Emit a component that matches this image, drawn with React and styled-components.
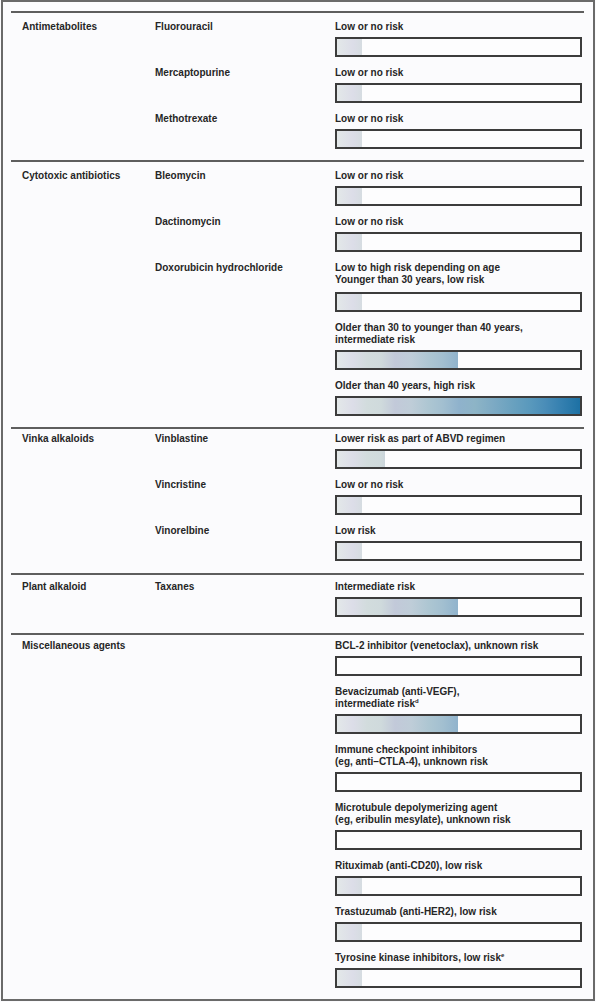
import styled, { createGlobalStyle } from "styled-components";

const GlobalStyle = createGlobalStyle`
  body {
    margin: 0;
    background: #fbfbfd;
    font-family: "Liberation Sans", Arial, sans-serif;
  }
`;

const Frame = styled.div`
  box-sizing: border-box;
  width: 594px;
  height: 1001px;
  margin-left: 1px;
  border: 2px solid #6a6a6a;
  padding: 9px 9px 0 8px;
  background: #fbfbfd;
`;

const Section = styled.div`
  border-top: 2px solid #5e5e5e;
  padding: ${(p) => p.$pt}px 0 ${(p) => p.$pb}px 11px;
  display: grid;
  grid-template-columns: 133px 180px 247px;
  row-gap: 10px;
`;

const Cell = styled.div`
  font-size: 10px;
  line-height: 12px;
  font-weight: 700;
  color: #262626;
`;

const Entries = styled.div`
  display: flex;
  flex-direction: column;
  gap: 10px;
`;

const Entry = styled.div`
  display: flex;
  flex-direction: column;
`;

const Label = styled.div`
  font-size: 10px;
  line-height: 12px;
  font-weight: 700;
  color: #262626;
  margin-bottom: ${(p) => p.$space}px;

  sup {
    font-size: 6px;
    line-height: 0;
    vertical-align: 4px;
  }
`;

const Bar = styled.div`
  box-sizing: border-box;
  height: 20px;
  width: 247px;
  border: 2px solid #3c3c3c;
  background: #fdfdfe;
  overflow: hidden;
`;

const Fill = styled.div`
  height: 100%;
  width: ${(p) => p.$w}px;
  background: linear-gradient(
    to right,
    #e3e8e9 0px,
    #dcdde8 16px,
    #d2dcdd 30px,
    #cfdadc 44px,
    #c2c9d9 58px,
    #bfcdd8 74px,
    #adc6d2 92px,
    #a2bfd0 106px,
    #8fb2cc 122px,
    #8db4c6 138px,
    #7daac4 156px,
    #69a1bf 176px,
    #5898bc 194px,
    #4a8db8 208px,
    #3580b0 224px,
    #1d71a4 243px
  );
  background-size: 243px 100%;
`;

const data = [
  {
    category: "Antimetabolites",
    pt: 8,
    pb: 11,
    drugs: [
      { name: "Fluorouracil", entries: [{ lines: ["Low or no risk"], fill: 25 }] },
      { name: "Mercaptopurine", entries: [{ lines: ["Low or no risk"], fill: 25 }] },
      { name: "Methotrexate", entries: [{ lines: ["Low or no risk"], fill: 25 }] },
    ],
  },
  {
    category: "Cytotoxic antibiotics",
    pt: 8,
    pb: 11,
    drugs: [
      { name: "Bleomycin", entries: [{ lines: ["Low or no risk"], fill: 25 }] },
      { name: "Dactinomycin", entries: [{ lines: ["Low or no risk"], fill: 25 }] },
      {
        name: "Doxorubicin hydrochloride",
        entries: [
          { lines: ["Low to high risk depending on age", "Younger than 30 years, low risk"], fill: 25, space: 6 },
          { lines: ["Older than 30 to younger than 40 years,", "intermediate risk"], fill: 121 },
          { lines: ["Older than 40 years, high risk"], fill: 243 },
        ],
      },
    ],
  },
  {
    category: "Vinka alkaloids",
    pt: 4,
    pb: 12,
    drugs: [
      { name: "Vinblastine", entries: [{ lines: ["Lower risk as part of ABVD regimen"], fill: 48 }] },
      { name: "Vincristine", entries: [{ lines: ["Low or no risk"], fill: 25 }] },
      { name: "Vinorelbine", entries: [{ lines: ["Low risk"], fill: 25 }] },
    ],
  },
  {
    category: "Plant alkaloid",
    pt: 6,
    pb: 16,
    drugs: [{ name: "Taxanes", entries: [{ lines: ["Intermediate risk"], fill: 121 }] }],
  },
  {
    category: "Miscellaneous agents",
    pt: 5,
    pb: 0,
    drugs: [
      {
        name: "",
        entries: [
          { lines: ["BCL-2 inhibitor (venetoclax), unknown risk"], fill: 0 },
          { lines: ["Bevacizumab (anti-VEGF),", "intermediate risk"], sup: "d", fill: 121 },
          { lines: ["Immune checkpoint inhibitors", "(eg, anti\u2013CTLA-4), unknown risk"], fill: 0 },
          { lines: ["Microtubule depolymerizing agent", "(eg, eribulin mesylate), unknown risk"], fill: 0 },
          { lines: ["Rituximab (anti-CD20), low risk"], fill: 25 },
          { lines: ["Trastuzumab (anti-HER2), low risk"], fill: 25 },
          { lines: ["Tyrosine kinase inhibitors, low risk"], sup: "e", fill: 25 },
        ],
      },
    ],
  },
];

function RiskEntry({ entry }) {
  return (
    <Entry>
      <Label $space={entry.space ?? 4}>
        {entry.lines.map((line, i) => (
          <div key={i}>
            {line}
            {entry.sup && i === entry.lines.length - 1 && <sup>{entry.sup}</sup>}
          </div>
        ))}
      </Label>
      <Bar>{entry.fill > 0 && <Fill $w={entry.fill} />}</Bar>
    </Entry>
  );
}

export default function App() {
  return (
    <>
      <GlobalStyle />
      <Frame>
        {data.map((section) => (
          <Section key={section.category} $pt={section.pt} $pb={section.pb}>
            {section.drugs.map((drug, di) => (
              <div key={di} style={{ display: "contents" }}>
                <Cell>{di === 0 ? section.category : ""}</Cell>
                <Cell>{drug.name}</Cell>
                <Entries>
                  {drug.entries.map((entry, ei) => (
                    <RiskEntry key={ei} entry={entry} />
                  ))}
                </Entries>
              </div>
            ))}
          </Section>
        ))}
      </Frame>
    </>
  );
}
